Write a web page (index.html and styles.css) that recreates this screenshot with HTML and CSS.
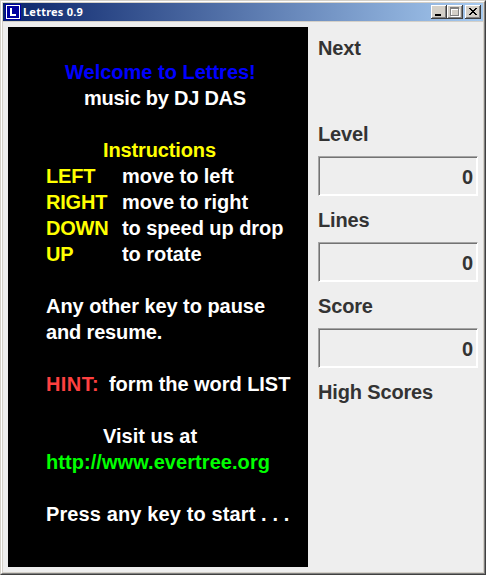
FILE: index.html
```html
<!DOCTYPE html>
<html lang="en">
<head>
<meta charset="utf-8">
<title>Lettres 0.9</title>
<link rel="stylesheet" href="styles.css">
</head>
<body>
<div class="window">
<div class="frame">
<header class="titlebar">
<svg class="app-icon" width="16" height="16" viewBox="0 0 16 16" shape-rendering="crispEdges"><path fill="#0000a0" d="M0 0h16v16H0z"/><path fill="none" stroke="#fff" d="M1.5 1.5h13v13h-13z"/><path fill="#fff" d="M5 4h2v6h4v2H5z"/></svg>
<h1 class="title">Lettres 0.9</h1>
<div class="controls">
<button class="control" aria-label="Minimize"><svg width="16" height="14" shape-rendering="crispEdges"><path d="M4 9h6v2H4z"/></svg></button>
<button class="control" aria-label="Maximize"><svg width="16" height="14" shape-rendering="crispEdges"><path fill="none" stroke="#fff" d="M4.5 4v7.5h8V3.5M4 4.5h8"/><path fill="none" stroke="#808080" d="M3.5 2.5h8v8h-8zM3 3.5h9"/></svg></button>
<button class="control close" aria-label="Close"><svg width="16" height="14" shape-rendering="crispEdges"><path d="M4 3h2v1h1v1h2V4h1V3h2v1h-1v1h-1v1H9v1h1v1h1v1h1v1h-2V9H9V8H7v1H6v1H4V9h1V8h1V7h1V6H6V5H5V4H4z"/></svg></button>
</div>
</header>
<main class="content">
<section class="board">
<p class="line welcome">Welcome to Lettres!</p>
<p class="line music">music by DJ DAS</p>
<h2 class="line instructions">Instructions</h2>
<dl class="keys">
<dt>LEFT</dt><dd>move to left</dd>
<dt>RIGHT</dt><dd>move to right</dd>
<dt>DOWN</dt><dd>to speed up drop</dd>
<dt>UP</dt><dd>to rotate</dd>
</dl>
<p class="line pause">Any other key to pause<br><span class="resume">and resume.</span></p>
<p class="line hint"><span class="hint-label">HINT:</span><span class="hint-text">form the word LIST</span></p>
<p class="line visit">Visit us at</p>
<p class="line url">http://www.evertree.org</p>
<p class="line start">Press any key to start . . .</p>
</section>
<aside class="stats">
<h2 class="label">Next</h2>
<div class="preview"></div>
<h2 class="label">Level</h2><output class="field">0</output>
<h2 class="label">Lines</h2><output class="field">0</output>
<h2 class="label">Score</h2><output class="field">0</output>
<h2 class="label high">High Scores</h2>
</aside>
</main>
</div>
</div>
</body>
</html>
```
FILE: styles.css
```css
* { box-sizing: border-box; margin: 0; padding: 0; }
body { width: 486px; height: 575px; overflow: hidden; font: bold 20px/26px "Liberation Sans", Arial, sans-serif; }
.window { height: 575px; border: 1px solid; border-color: #d4d0c8 #404040 #404040 #d4d0c8; }
.frame { height: 573px; border: 1px solid; border-color: #fff #808080 #808080 #fff; background: #d4d0c8; padding: 1px; }
.titlebar { height: 18px; display: flex; align-items: center; padding: 0 2px; background: linear-gradient(to right, #0a246a, #a6caf0); }
.app-icon { display: block; }
.title { margin-left: 2px; flex: 1; color: #fff; font: bold 11px/16px "Noto Sans", Tahoma, sans-serif; letter-spacing: 0.22px; }
.controls { display: flex; }
.control { width: 16px; height: 14px; border: 0; background: #d4d0c8; box-shadow: inset -1px -1px #404040, inset 1px 1px #fff, inset -2px -2px #808080; }
.control svg { display: block; }
.close { margin-left: 2px; }
.content { height: 550px; margin-top: 1px; padding: 5px; display: flex; gap: 10px; background: #eee; }
.board { width: 300px; height: 540px; padding: 32px 0 0 38px; background: #000; color: #fff; white-space: nowrap; }
.line { font-size: 20px; line-height: 26px; }
.welcome { padding-left: 19px; color: #00f; }
.music { padding-left: 38px; letter-spacing: -0.25px; }
.instructions { margin-top: 26px; padding-left: 57px; color: #ff0; letter-spacing: -0.13px; }
.keys { display: grid; grid-template-columns: 76px 1fr; letter-spacing: -0.05px; }
.keys dt { color: #ff0; letter-spacing: -0.2px; }
.pause, .hint, .visit, .start { margin-top: 26px; }
.pause { letter-spacing: -0.05px; }
.resume { letter-spacing: -0.15px; }
.hint { display: flex; }
.hint-label { width: 63px; color: #ff4040; letter-spacing: 0.4px; }
.hint-text { letter-spacing: -0.05px; }
.visit { padding-left: 57px; }
.url { color: #0f0; letter-spacing: 0.06px; }
.start { letter-spacing: 0.12px; }
.stats { width: 160px; padding-top: 8px; color: #333; }
.label { height: 26px; font-size: 20px; line-height: 26px; letter-spacing: -0.15px; }
.preview { height: 60px; }
.field { display: block; height: 40px; margin: 9px 0 11px; border: 1px solid; border-color: #a5a5a5 #fff #fff #a5a5a5; box-shadow: inset 1px 1px #737373, inset -1px -1px #fff; padding-right: 4px; line-height: 40px; text-align: right; }
```
